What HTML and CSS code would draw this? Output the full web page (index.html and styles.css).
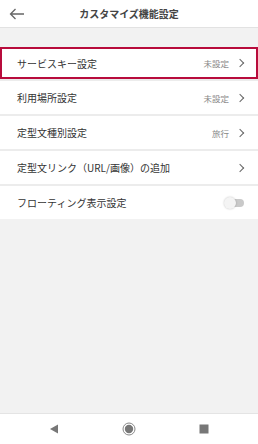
FILE: index.html
```
<!DOCTYPE html>
<html lang="ja">
<head>
    <meta charset="UTF-8">
    <meta name="viewport" content="width=device-width, initial-scale=1.0">
    <title>カスタマイズ機能設定</title>
    <link rel="stylesheet" href="styles.css">
</head>
<body>
    <div class="screen">
        <header class="header">
            <button class="back">
                <svg width="16" height="12" viewBox="0 0 16 12"><path d="M15 6H1.5M6.5 1L1.5 6l5 5" fill="none" stroke="#666" stroke-width="1.3"/></svg>
            </button>
            <h1>カスタマイズ機能設定</h1>
        </header>

        <div class="list">
            <div class="row selected">
                <span class="label">サービスキー設定</span>
                <span class="value">未設定</span>
                <span class="chev"></span>
            </div>
            <div class="row">
                <span class="label">利用場所設定</span>
                <span class="value">未設定</span>
                <span class="chev"></span>
            </div>
            <div class="row">
                <span class="label">定型文種別設定</span>
                <span class="value">旅行</span>
                <span class="chev"></span>
            </div>
            <div class="row">
                <span class="label">定型文リンク（URL/画像）の追加</span>
                <span class="chev"></span>
            </div>
            <div class="row">
                <span class="label">フローティング表示設定</span>
                <span class="toggle"><span class="knob"></span></span>
            </div>
        </div>

        <nav class="navbar">
            <svg width="10" height="10" viewBox="0 0 10 10"><path d="M1 5L9 0.5V9.5Z" fill="#777"/></svg>
            <svg width="14" height="14" viewBox="0 0 14 14"><circle cx="7" cy="7" r="6" fill="none" stroke="#888" stroke-width="1"/><circle cx="7" cy="7" r="4.2" fill="#777"/></svg>
            <svg width="10" height="10" viewBox="0 0 10 10"><rect x="0.5" y="0.5" width="9" height="9" fill="#777"/></svg>
        </nav>
    </div>
</body>
</html>
```

FILE: styles.css
```
* {
    margin: 0;
    padding: 0;
    box-sizing: border-box;
}

body {
    font-family: "Noto Sans CJK JP", "Noto Sans", sans-serif;
    background: #f2f2f2;
    color: #333;
}

.screen {
    width: 258px;
    height: 444px;
    display: flex;
    flex-direction: column;
    background: #f2f2f2;
}

.header {
    height: 28px;
    background: #fff;
    border-bottom: 1px solid #e2e2e2;
    display: flex;
    align-items: center;
    justify-content: center;
    position: relative;
}

.back {
    position: absolute;
    left: 9px;
    top: 8px;
    border: none;
    background: none;
    display: flex;
}

h1 {
    font-size: 10px;
    font-weight: bold;
    color: #444;
}

.list {
    margin-top: 19px;
    display: flex;
    flex-direction: column;
    gap: 2px;
    background: #ececec;
}

.row {
    height: 33px;
    background: #fff;
    display: flex;
    align-items: center;
    padding: 0 13px 0 17px;
    font-size: 10px;
}

.row.selected {
    height: 32px;
    border: 2px solid #b80c3c;
    padding-left: 15px;
    padding-right: 11px;
}

.label {
    flex: 1;
    color: #333;
}

.value {
    font-size: 8.5px;
    color: #888;
    margin-right: 8px;
}

.chev {
    width: 6px;
    height: 6px;
    border-top: 1.3px solid #666;
    border-right: 1.3px solid #666;
    transform: rotate(45deg);
    margin-right: 2px;
}

.toggle {
    width: 16px;
    height: 8px;
    border-radius: 4px;
    background: #c9c9c9;
    position: relative;
    margin-right: 1px;
}

.knob {
    position: absolute;
    left: -4px;
    top: -2px;
    width: 12px;
    height: 12px;
    border-radius: 50%;
    background: #f4f4f4;
    box-shadow: 0 0 2px rgba(0, 0, 0, 0.25);
}

.navbar {
    margin-top: auto;
    height: 31px;
    background: #fff;
    border-top: 1px solid #e4e4e4;
    display: flex;
    align-items: center;
    justify-content: center;
    gap: 63px;
}
```
